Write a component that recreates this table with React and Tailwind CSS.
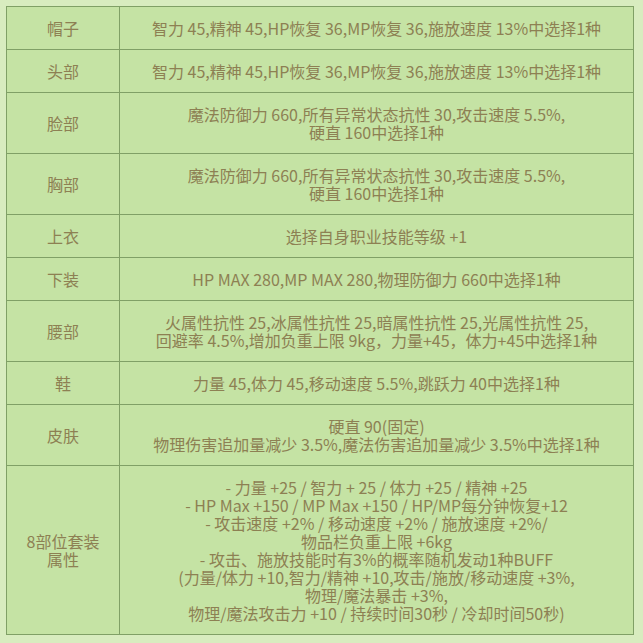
export default function App() {
  const rows = [
    { k: ["帽子"], v: ["智力 45,精神 45,HP恢复 36,MP恢复 36,施放速度 13%中选择1种"] },
    { k: ["头部"], v: ["智力 45,精神 45,HP恢复 36,MP恢复 36,施放速度 13%中选择1种"] },
    { k: ["脸部"], v: ["魔法防御力 660,所有异常状态抗性 30,攻击速度 5.5%,", "硬直 160中选择1种"] },
    { k: ["胸部"], v: ["魔法防御力 660,所有异常状态抗性 30,攻击速度 5.5%,", "硬直 160中选择1种"] },
    { k: ["上衣"], v: ["选择自身职业技能等级 +1"] },
    { k: ["下装"], v: ["HP MAX 280,MP MAX 280,物理防御力 660中选择1种"] },
    { k: ["腰部"], v: ["火属性抗性 25,冰属性抗性 25,暗属性抗性 25,光属性抗性 25,", "回避率 4.5%,增加负重上限 9kg，力量+45，体力+45中选择1种"] },
    { k: ["鞋"], v: ["力量 45,体力 45,移动速度 5.5%,跳跃力 40中选择1种"] },
    { k: ["皮肤"], v: ["硬直 90(固定)", "物理伤害追加量减少 3.5%,魔法伤害追加量减少 3.5%中选择1种"] },
    {
      k: ["8部位套装", "属性"],
      v: [
        "- 力量 +25 / 智力 + 25 / 体力 +25 / 精神 +25",
        "- HP Max +150 / MP Max +150 / HP/MP每分钟恢复+12",
        "- 攻击速度 +2% / 移动速度 +2% / 施放速度 +2%/",
        "物品栏负重上限 +6kg",
        "- 攻击、施放技能时有3%的概率随机发动1种BUFF",
        "(力量/体力 +10,智力/精神 +10,攻击/施放/移动速度 +3%,",
        "物理/魔法暴击 +3%,",
        "物理/魔法攻击力 +10 / 持续时间30秒 / 冷却时间50秒)",
      ],
    },
  ];
  return (
    <div
      className="w-[643px] h-[643px] bg-[#d8ecbf] pt-[6px] pl-[6px] text-[#8d8053] text-[16px] leading-[18px]"
      style={{ fontFamily: '"Microsoft YaHei", "Noto Sans CJK SC", "Noto Sans", sans-serif' }}
    >
      <table className="w-[628px] border-collapse bg-[#c5e3a4]">
        <tbody>
          {rows.map((r, i) => (
            <tr key={i}>
              <td className="w-[113px] border border-[#80a066] py-[12px] px-1 text-center align-middle">
                {r.k.map((t, j) => (
                  <div key={j} className="h-[18px]">{t}</div>
                ))}
              </td>
              <td className="border border-[#80a066] py-[12px] px-1 text-center align-middle">
                {r.v.map((t, j) => (
                  <div key={j} className="h-[18px] whitespace-nowrap">{t}</div>
                ))}
              </td>
            </tr>
          ))}
        </tbody>
      </table>
    </div>
  );
}
